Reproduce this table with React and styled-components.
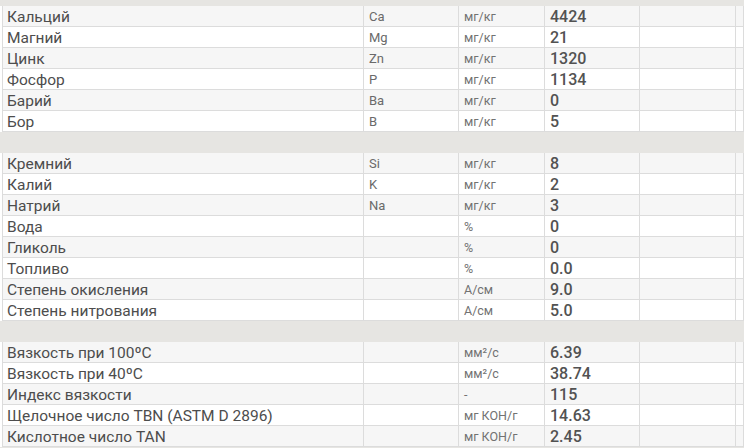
import React from "react";
import styled, { createGlobalStyle } from "styled-components";

const GlobalStyle = createGlobalStyle`
	body {
		margin: 0;
		background: #ffffff;
		font-family: Roboto, "Liberation Sans", sans-serif;
	}
`;

const Sheet = styled.div`
	width: 744px;
	height: 448px;
	overflow: hidden;
	background: #ffffff;
`;

const Band = styled.div`
	height: ${({ h }) => h || 21}px;
	background: #e6e5e2;
`;

const Row = styled.div`
	display: grid;
	grid-template-columns: 361px 95px 86px 95px 96px 1fr;
	height: 20px;
	margin-left: 2px;
	border-bottom: 1px solid #dcdcdc;
	border-left: 1px solid #dcdcdc;
	background: ${({ odd }) => (odd ? "#f6f6f6" : "#ffffff")};
`;

const Cell = styled.div`
	display: flex;
	align-items: center;
	padding-left: ${({ pad }) => pad || 5}px;
	padding-top: 1px;
	border-right: 1px solid #dcdcdc;
	white-space: nowrap;
	overflow: hidden;
`;

const Name = styled(Cell)`
	font-size: 15.5px;
	color: #4d4d4d;
	padding-left: 4px;
`;

const Symbol = styled(Cell)`
	font-size: 13px;
	color: #6a6a6a;
`;

const Unit = styled(Cell)`
	font-size: 12.5px;
	color: #727272;
`;

const Value = styled(Cell)`
	font-size: 16px;
	font-weight: 500;
	color: #525252;
`;

const sections = [
	[
		["Кальций", "Ca", "мг/кг", "4424"],
		["Магний", "Mg", "мг/кг", "21"],
		["Цинк", "Zn", "мг/кг", "1320"],
		["Фосфор", "P", "мг/кг", "1134"],
		["Барий", "Ba", "мг/кг", "0"],
		["Бор", "B", "мг/кг", "5"],
	],
	[
		["Кремний", "Si", "мг/кг", "8"],
		["Калий", "K", "мг/кг", "2"],
		["Натрий", "Na", "мг/кг", "3"],
		["Вода", "", "%", "0"],
		["Гликоль", "", "%", "0"],
		["Топливо", "", "%", "0.0"],
		["Степень окисления", "", "А/см", "9.0"],
		["Степень нитрования", "", "А/см", "5.0"],
	],
	[
		["Вязкость при 100ºС", "", "мм²/с", "6.39"],
		["Вязкость при 40ºС", "", "мм²/с", "38.74"],
		["Индекс вязкости", "", "-", "115"],
		["Щелочное число TBN (ASTM D 2896)", "", "мг КОН/г", "14.63"],
		["Кислотное число TAN", "", "мг КОН/г", "2.45"],
	],
];

export default function App() {
	return (
		<Sheet>
			<GlobalStyle />
			<Band h={6} />
			{sections.map((rows, s) => (
				<React.Fragment key={s}>
					{s > 0 && <Band />}
					{rows.map((r, i) => (
						<Row key={r[0]} odd={i % 2 === 0}>
							<Name>{r[0]}</Name>
							<Symbol>{r[1]}</Symbol>
							<Unit>{r[2]}</Unit>
							<Value>{r[3]}</Value>
							<Cell />
							<Cell />
						</Row>
					))}
				</React.Fragment>
			))}
			<Band />
		</Sheet>
	);
}
